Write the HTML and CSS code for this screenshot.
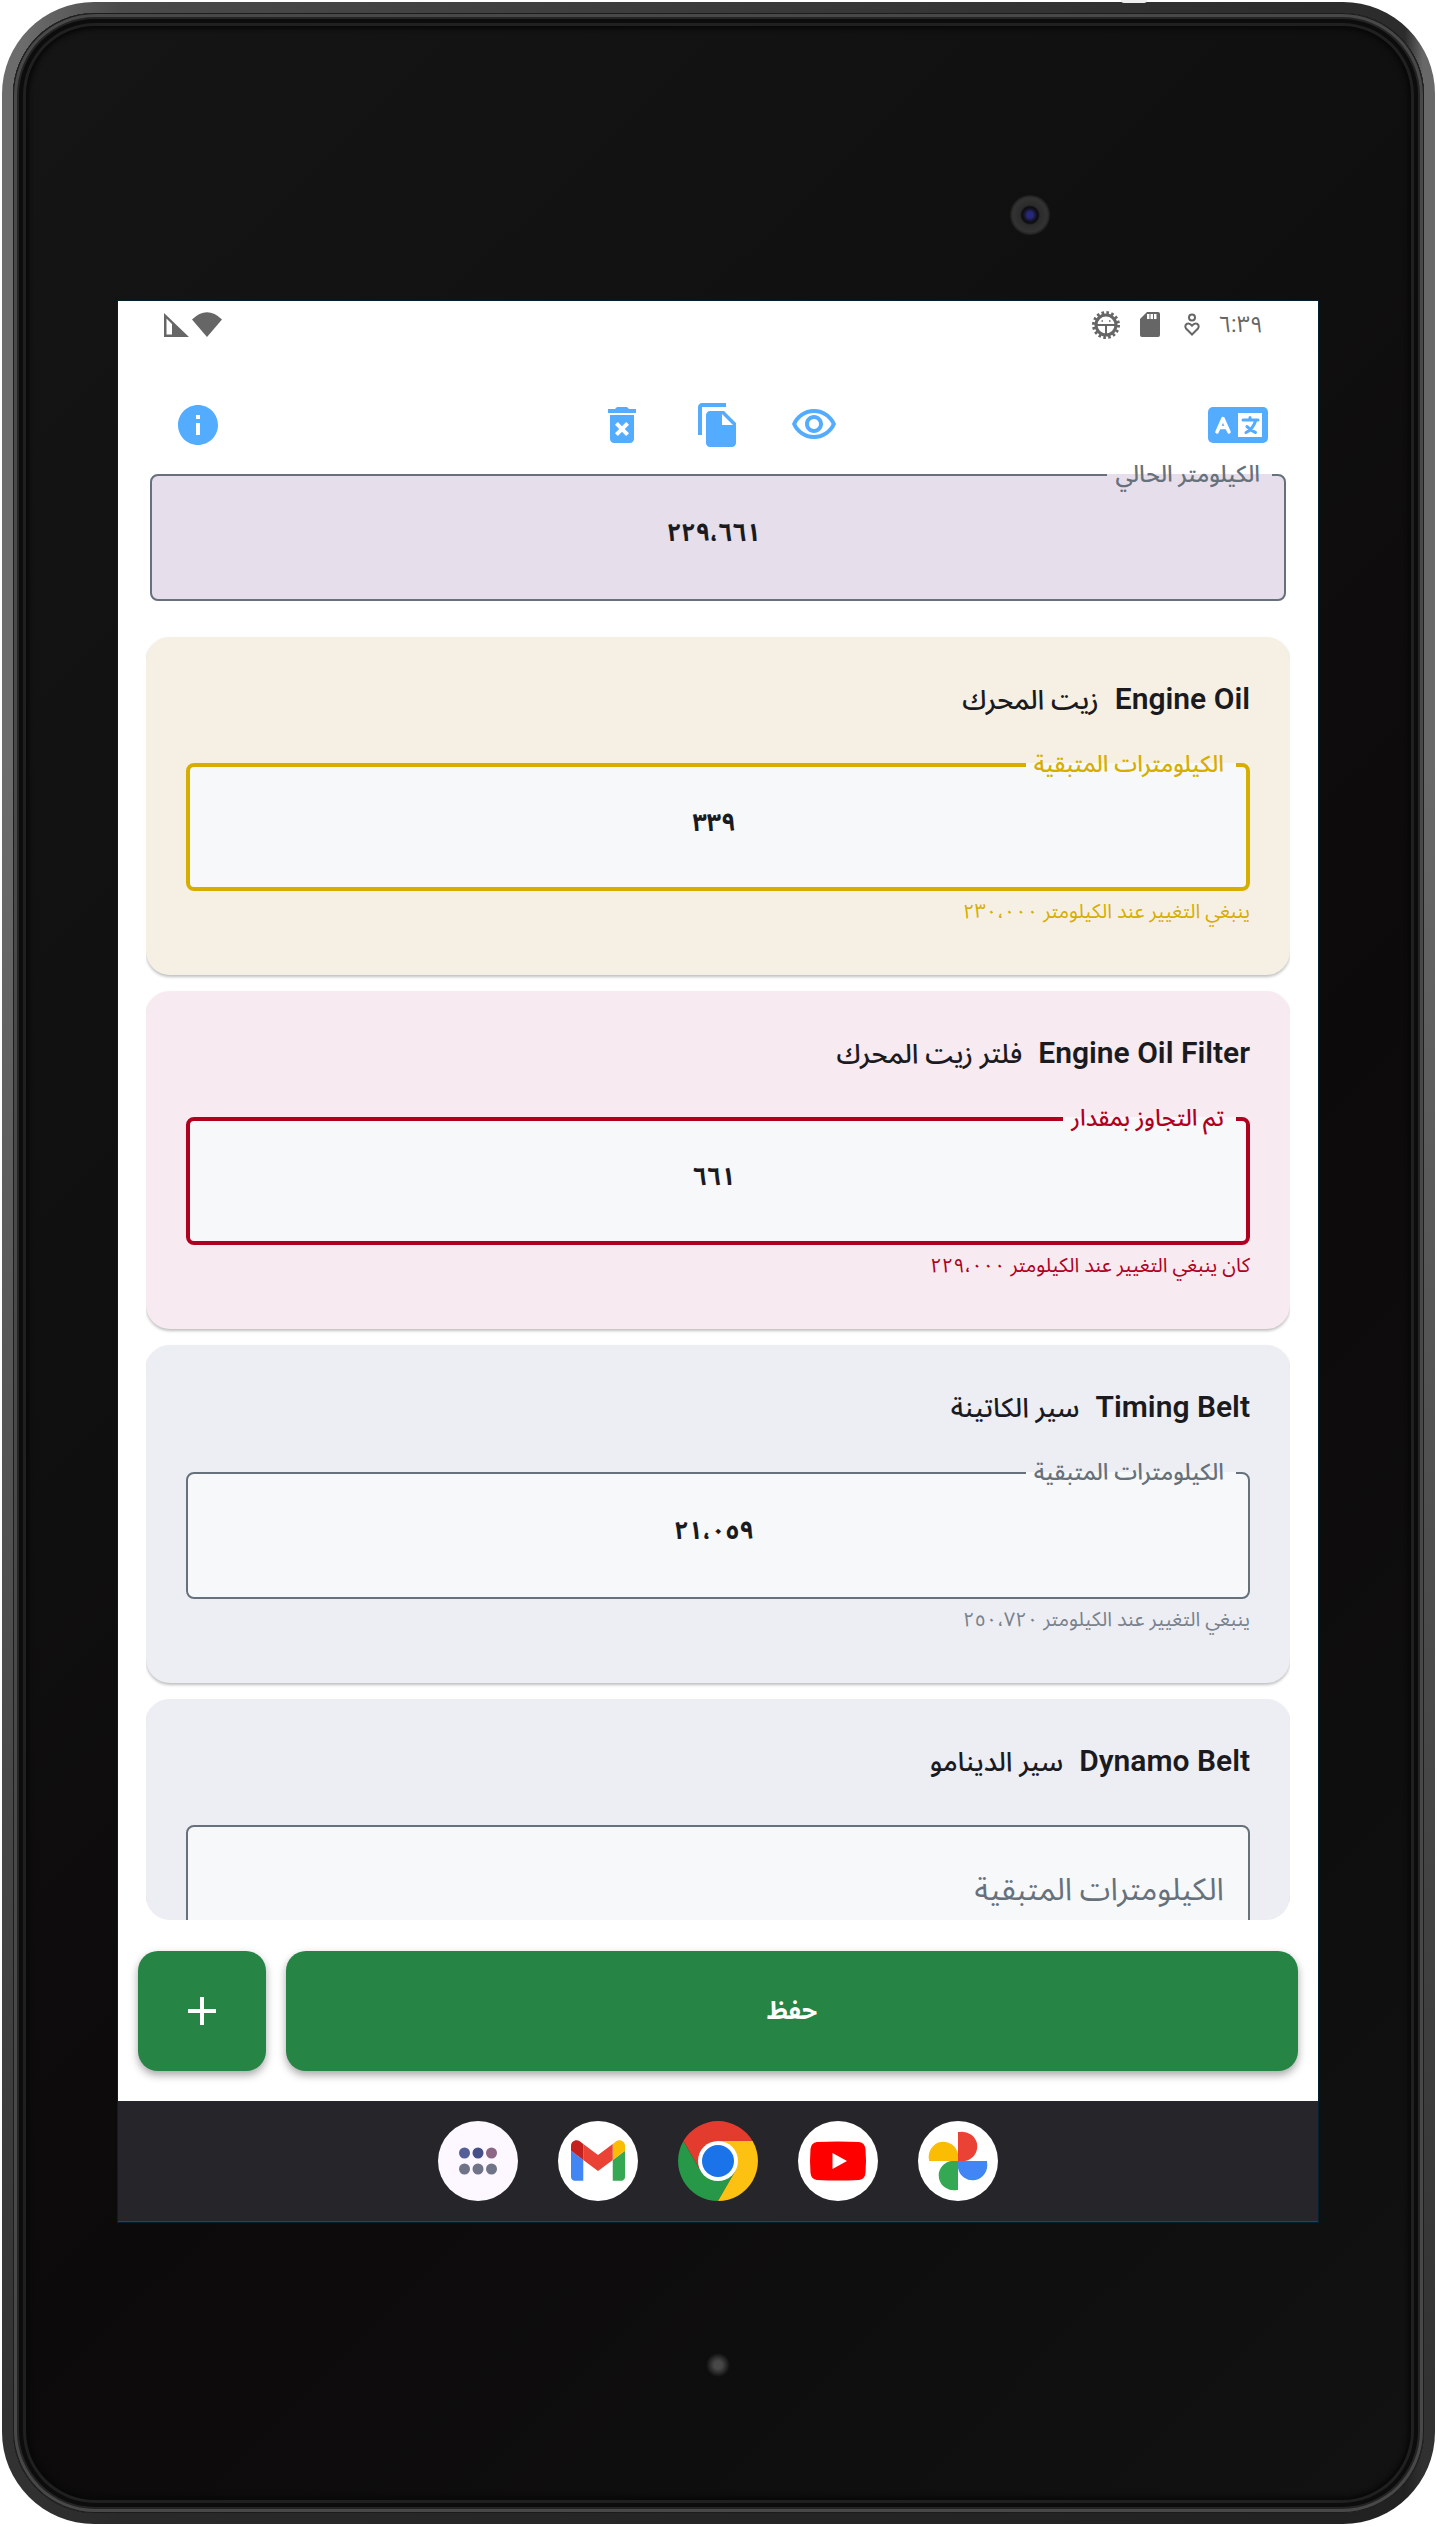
FILE: index.html
```html
<!DOCTYPE html>
<html lang="ar" dir="rtl">
<head>
<meta charset="utf-8">
<meta name="viewport" content="width=device-width, initial-scale=1">
<title>صيانة السيارة</title>
<link rel="stylesheet" href="styles.css">
</head>
<body>
<div class="device">
  <span class="power-key"></span>
  <div class="bezel">
    <span class="camera"></span>
    <div class="screen">
      <div class="status">
        <span class="time">٦:٣٩</span>
        <svg class="heart" width="28" height="28" viewBox="0 0 28 28" fill="none" stroke="#666" stroke-width="2"><circle cx="14" cy="6.500" r="3"/><path d="M14 23.500l-6-6c-1.500-2-.5-5 2.500-5 1.500 0 2.500 1 3.500 2.200 1-1.200 2-2.200 3.500-2.200 3 0 4 3 2.500 5z"/></svg>
        <svg class="sdcard" width="20" height="26" viewBox="0 0 20 26"><path fill="#666" d="M7 0h11a2 2 0 0 1 2 2v21a2 2 0 0 1-2 2H2a2 2 0 0 1-2-2V7z"/><path fill="#fff" d="M7 2h2.500v5H7zM10.500 2H13v5h-2.500zM14 2h2.500v5H14z"/></svg>
        <svg width="28" height="28" viewBox="0 0 28 28" fill="none" stroke="#666"><circle cx="14" cy="14" r="10" stroke-width="3"/><circle cx="14" cy="14" r="12.500" stroke-width="3" stroke-dasharray="2.600 2.310"/><path stroke-width="2" d="M4 14h20M14 14v10"/><path stroke-width="1.500" d="M9.500 10h1.500M17 10h1.500"/></svg>
        <svg class="signals" width="60" height="26" viewBox="0 0 60 26" fill="#666"><path fill-rule="evenodd" d="M0 1l25 24H0zM2.500 6.500v16H8V12z"/><path d="M28 7.500Q43-7 58 7.500L43 25z"/></svg>
      </div>

      <header class="toolbar">
        <button class="icon-btn lang" type="button" aria-label="اللغة">
          <svg width="60" height="36" viewBox="0 0 60 36"><rect width="60" height="36" rx="5" fill="#54acff"/><path fill="#fff" d="M30 6h24v24H30z"/><g fill="none" stroke-linecap="round" stroke-linejoin="round"><path stroke="#fff" stroke-width="3.500" d="M9 25l6-13.500L21 25M11.500 20.500h7"/><path stroke="#54acff" stroke-width="3" d="M35 13h15M42 10.500V13M47.500 14c-1.500 5-4.500 9-9.500 11.500M39 19.500c2 2.500 5 4.500 8.500 6"/></g></svg>
        </button>
        <div class="actions">
          <button class="icon-btn" type="button" aria-label="عرض"><svg width="48" height="48" viewBox="0 0 24 24" fill="#54acff"><path d="M12 6c3.790 0 7.170 2.130 8.820 5.500C19.170 14.870 15.790 17 12 17s-7.170-2.130-8.820-5.500C4.830 8.130 8.210 6 12 6m0-2C7 4 2.730 7.110 1 11.500 2.730 15.890 7 19 12 19s9.270-3.110 11-7.500C21.270 7.110 17 4 12 4zm0 5c1.380 0 2.500 1.120 2.500 2.500S13.380 14 12 14s-2.500-1.120-2.500-2.500S10.620 9 12 9m0-2c-2.480 0-4.500 2.020-4.500 4.500S9.520 16 12 16s4.500-2.020 4.500-4.500S14.480 7 12 7z"/></svg></button>
          <button class="icon-btn" type="button" aria-label="نسخ"><svg width="48" height="48" viewBox="0 0 24 24" fill="#54acff"><path d="M16 1H4c-1.100 0-2 .9-2 2v14h2V3h12V1zm-1 4l6 6v10c0 1.100-.9 2-2 2H7.990C6.890 23 6 22.100 6 21l.01-14c0-1.100.89-2 1.990-2h7zm-1 7h5.500L14 6.500V12z"/></svg></button>
          <button class="icon-btn" type="button" aria-label="حذف"><svg width="48" height="48" viewBox="0 0 24 24"><path fill="#54acff" d="M6 19c0 1.100.9 2 2 2h8c1.100 0 2-.9 2-2V7H6v12zM19 4h-3.500l-1-1h-5l-1 1H5v2h14V4z"/><path stroke="#fff" stroke-width="2" d="M9.200 11.200l5.600 5.600M14.800 11.200l-5.600 5.600"/></svg></button>
        </div>
        <button class="icon-btn info" type="button" aria-label="معلومات"><svg width="48" height="48" viewBox="0 0 24 24" fill="#54acff"><path d="M12 2C6.480 2 2 6.480 2 12s4.480 10 10 10 10-4.480 10-10S17.520 2 12 2zm1 15h-2v-6h2v6zm0-8h-2V7h2v2z"/></svg></button>
      </header>

      <main class="list">
        <fieldset class="field current">
          <legend><label for="current-km">الكيلومتر الحالي</label></legend>
          <input id="current-km" type="text" value="٢٢٩،٦٦١">
        </fieldset>

        <section class="card warning">
          <h2><span class="en">Engine Oil</span><span>زيت المحرك</span></h2>
          <fieldset class="field">
            <legend><label for="oil">الكيلومترات المتبقية</label></legend>
            <input id="oil" type="text" value="٣٣٩">
          </fieldset>
          <p class="helper">ينبغي التغيير عند الكيلومتر ٢٣٠،٠٠٠</p>
        </section>

        <section class="card overdue">
          <h2><span class="en">Engine Oil Filter</span><span>فلتر زيت المحرك</span></h2>
          <fieldset class="field">
            <legend><label for="oil-filter">تم التجاوز بمقدار</label></legend>
            <input id="oil-filter" type="text" value="٦٦١">
          </fieldset>
          <p class="helper">كان ينبغي التغيير عند الكيلومتر ٢٢٩،٠٠٠</p>
        </section>

        <section class="card">
          <h2><span class="en">Timing Belt</span><span>سير الكاتينة</span></h2>
          <fieldset class="field">
            <legend><label for="timing">الكيلومترات المتبقية</label></legend>
            <input id="timing" type="text" value="٢١،٠٥٩">
          </fieldset>
          <p class="helper">ينبغي التغيير عند الكيلومتر ٢٥٠،٧٢٠</p>
        </section>

        <section class="card">
          <h2><span class="en">Dynamo Belt</span><span>سير الدينامو</span></h2>
          <div class="field empty">
            <input type="text" placeholder="الكيلومترات المتبقية" aria-label="الكيلومترات المتبقية">
          </div>
        </section>
      </main>

      <div class="bottom-bar">
        <button class="btn save" type="submit">حفظ</button>
        <button class="btn add" type="button" aria-label="إضافة"><svg width="28" height="28" viewBox="0 0 28 28" fill="#fff"><path d="M12 0h4v12h12v4H16v12h-4V16H0v-4h12z"/></svg></button>
      </div>

      <nav class="dock">
        <a href="#photos" aria-label="Photos"><svg viewBox="0 0 80 80"><circle cx="40" cy="40" r="40" fill="#fff"/><path fill="#ea4335" d="M40 11h1a15 14.500 0 0 1 6 29h-7z"/><path fill="#4285f4" d="M69 40v1a14.500 15 0 0 1-29 6v-7z"/><path fill="#34a853" d="M40 69h-1a15 14.500 0 0 1-6-29h7z"/><path fill="#fbbc04" d="M11 40v-1a14.500 15 0 0 1 29-6v7z"/></svg></a>
        <a href="#youtube" aria-label="YouTube"><svg viewBox="0 0 80 80"><circle cx="40" cy="40" r="40" fill="#fff"/><path fill="#f00" d="M19 21Q40 20 61 21 67 22 67.500 28 68.500 40 67.500 52 67 58 61 59 40 60 19 59 13 58 12.500 52 11.500 40 12.500 28 13 22 19 21z"/><path fill="#fff" d="M34.500 32v16L49 40z"/></svg></a>
        <a href="#chrome" aria-label="Chrome"><svg viewBox="0 0 80 80"><path fill="#e33b2e" d="M5.400 20A40 40 0 0 1 74.600 20H40v20L22.700 50z"/><path fill="#279847" d="M5.400 20A40 40 0 0 0 40 80l17.300-30L40 40l-17.300 10z"/><path fill="#fcc111" d="M74.600 20A40 40 0 0 1 40 80l17.300-30L40 40V20z"/><circle cx="40" cy="40" r="20" fill="#fff"/><circle cx="40" cy="40" r="16" fill="#1a73e8"/></svg></a>
        <a href="#gmail" aria-label="Gmail"><svg viewBox="0 0 80 80"><circle cx="40" cy="40" r="40" fill="#fff"/><svg x="13" y="19" width="54" height="41" viewBox="52 42 88 66"><path fill="#4285f4" d="M58 108h14V74L52 59v43c0 3.320 2.690 6 6 6"/><path fill="#34a853" d="M120 108h14c3.320 0 6-2.690 6-6V59l-20 15"/><path fill="#fbbc04" d="M120 48v26l20-15v-8c0-7.420-8.470-11.650-14.400-7.200"/><path fill="#ea4335" d="M72 74V48l24 18 24-18v26L96 92"/><path fill="#c5221f" d="M52 51v8l20 15V48l-5.600-4.200c-5.940-4.450-14.400-.22-14.400 7.200"/></svg></svg></a>
        <a href="#apps" aria-label="Apps"><svg viewBox="0 0 80 80"><circle cx="40" cy="40" r="40" fill="#fdf8ff"/><circle cx="26.500" cy="32" r="5.500" fill="#555f98"/><circle cx="40" cy="32" r="5.500" fill="#454f88"/><circle cx="53.500" cy="32" r="5.500" fill="#8c6684"/><g fill="#707488"><circle cx="26.500" cy="48" r="5.500"/><circle cx="40" cy="48" r="5.500"/><circle cx="53.500" cy="48" r="5.500"/></g></svg></a>
      </nav>
    </div>
    <div class="chin"><span class="led"></span></div>
  </div>
</div>
</body>
</html>
```
FILE: styles.css
```css
* { box-sizing: border-box; }

:root {
  --grey: #66717b;
  --gold: #d6ae00;
  --red: #b00020;
  --green: #268445;
}

body {
  margin: 0;
  background: #fff;
  font-family: Roboto, "Noto Sans Arabic", "DejaVu Sans", sans-serif;
  color: #1b1b1f;
}

/* tablet shell */
.device {
  position: relative;
  display: flex;
  height: 100vh;
  padding: 2px 2px 3px;
}

.device::before {
  content: "";
  position: absolute;
  inset: 2px 2px 3px;
  border-radius: 92px;
  background:
    linear-gradient(180deg, transparent 30%, rgba(30, 30, 30, .75) 96%),
    linear-gradient(90deg, #6c6c6c 0 20px, #4a4a4a 120px, #3a3a3a 50%, #2c2c2c calc(100% - 100px), #2c2c2c calc(100% - 30px), #686868 calc(100% - 12px));
}

.power-key {
  position: absolute;
  z-index: 1;
  top: 0;
  left: 78%;
  width: 26px;
  height: 3px;
  border-radius: 0 0 14px 14px;
  background: #eee;
}

.bezel {
  position: relative;
  flex: 1;
  display: flex;
  flex-direction: column;
  margin: 11px;
  padding: 288px 106px 0 105px;
  border-radius: 82px;
  background: linear-gradient(135deg, #151515, #100f10 40%, #0c0a0b 60%, #121212);
  box-shadow:
    inset 0 0 0 1px #1c1c1c,
    inset 0 0 0 4px #484848,
    inset 0 0 0 6px #242424,
    inset 0 0 0 10px #0c0c0c,
    inset 0 0 0 13px #202020,
    inset 0 0 4px 16px #080808;
}

.camera {
  position: absolute;
  top: 182px;
  left: calc(71% - 5px);
  width: 40px;
  height: 40px;
  border-radius: 50%;
  background: radial-gradient(circle, #28287a 0 3px, #15152a 6px, #0c0c0f 8px, #2b2b2b 10px, #333 17px, #1c1c1c 20px);
}

.chin {
  display: flex;
  justify-content: center;
  padding: 131px 0 136px;
}

.led {
  width: 24px;
  height: 24px;
  border-radius: 50%;
  background: radial-gradient(circle, #484848 0 4px, transparent 12px);
}

/* screen */
.screen {
  flex: 1;
  min-height: 0;
  display: flex;
  flex-direction: column;
  background: #fff;
  box-shadow: 0 0 0 1px #04202e;
}

.status {
  display: flex;
  align-items: center;
  height: 48px;
  padding: 0 55px 0 46px;
}

.time {
  font-size: 23px;
  line-height: 32px;
  color: #666;
}

.heart { margin: 0 12px 0 18px; }
.sdcard { margin-left: 20px; }
.signals { margin-right: auto; }

.toolbar {
  display: grid;
  grid-template-columns: 1fr auto 1fr;
  align-items: center;
  padding: 52px 50px 0;
}

.icon-btn {
  display: flex;
  padding: 0;
  border: 0;
  background: none;
}

.actions { display: flex; gap: 48px; }
.lang { justify-self: start; }
.info { justify-self: end; margin-left: 6px; }

.list {
  flex: 1;
  min-height: 0;
  display: flex;
  flex-direction: column;
  gap: 16px;
  margin: 0 28px;
  padding-top: 14px;
  border-radius: 0 0 24px 24px;
  overflow: hidden;
}

/* outlined text field */
.field {
  min-width: 0;
  height: 138px;
  margin: 0;
  padding: 0 12px;
  border: 2px solid var(--grey);
  border-radius: 8px;
  background: #f7f8fa;
  color: var(--grey);
}

.field legend {
  padding: 0 12px 0 8px;
  font-size: 23px;
  line-height: 24px;
  font-weight: 500;
}

.field input {
  display: block;
  width: 100%;
  height: 92px;
  padding: 0 16px 0 8px;
  border: 0;
  outline: 0;
  background: none;
  font: bold 25px/32px Roboto, "Noto Sans Arabic", "DejaVu Sans", sans-serif;
  color: #1b1b1f;
  text-align: center;
}

.field.current {
  flex: none;
  margin: 0 4px 20px;
  background: #e6deeb;
}

.field.empty {
  height: 128px;
  margin-top: 44px;
}

.field.empty input {
  height: 124px;
  padding: 0 12px;
  font-weight: 400;
  font-size: 31px;
  text-align: right;
}

.field input::placeholder { color: var(--grey); opacity: 1; }

.card {
  flex: none;
  height: 338px;
  padding: 42px 40px 48px;
  border-radius: 24px;
  background: #edeef4;
  box-shadow: 0 2px 3px rgba(0, 0, 0, .25);
}

.card h2 {
  display: flex;
  align-items: baseline;
  gap: 16px;
  height: 40px;
  margin: 0 0 34px;
  font-size: 27px;
  line-height: 40px;
  font-weight: 500;
}

.card .en { font-size: 30px; font-weight: 600; }

.helper {
  margin: 4px 0 0;
  font-size: 20px;
  line-height: 32px;
  color: #7a828b;
}

.card.warning { background: #f6f0e4; }
.card.overdue { background: #f7eaf0; }
.warning .field, .overdue .field { padding: 0 10px; border-width: 4px; }
.warning .field { border-color: var(--gold); }
.overdue .field { border-color: var(--red); }
.warning legend, .warning .helper { color: var(--gold); }
.overdue legend, .overdue .helper { color: var(--red); }

/* actions and dock */
.bottom-bar {
  display: flex;
  gap: 20px;
  padding: 31px 20px 30px;
}

.btn {
  display: flex;
  align-items: center;
  justify-content: center;
  height: 120px;
  padding: 0;
  border: 0;
  border-radius: 20px;
  background: var(--green);
  box-shadow: 0 4px 8px rgba(0, 0, 0, .35);
  color: #fff;
  font: bold 25px/32px Roboto, "Noto Sans Arabic", "DejaVu Sans", sans-serif;
}

.save { flex: 1; }
.add { width: 128px; }

.dock {
  display: flex;
  justify-content: center;
  gap: 40px;
  padding: 20px;
  background: #26252a;
  border-bottom: 1px solid #0b4d6b;
}

.dock a { display: flex; width: 80px; height: 80px; }
.dock svg { width: 100%; height: 100%; }
.dock svg svg { width: 54px; height: 41px; }
```
